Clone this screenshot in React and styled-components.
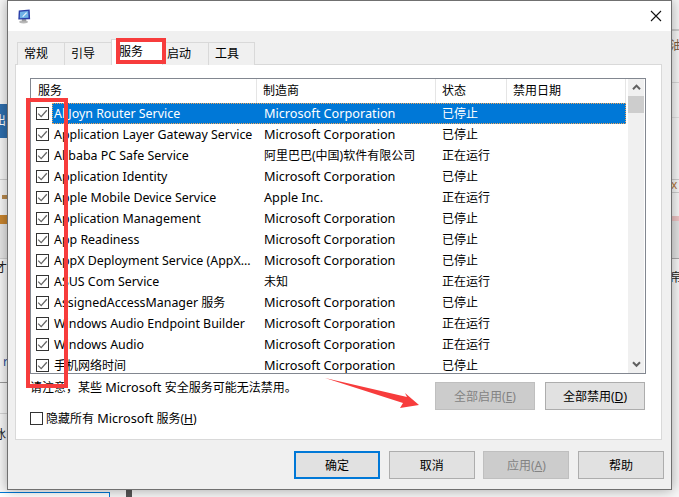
import styled, { createGlobalStyle } from "styled-components";

const GlobalStyle = createGlobalStyle`
  html, body {
    margin: 0;
    padding: 0;
    width: 679px;
    height: 497px;
    overflow: hidden;
    background: #f4f4f4;
  }
  * { box-sizing: border-box; }
`;

const Page = styled.div`
  position: relative;
  width: 679px;
  height: 497px;
  overflow: hidden;
  font-family: "Noto Sans", "Noto Sans CJK SC", sans-serif;
  font-size: 12px;
  color: #000;
`;

// bits of the other windows peeking out behind the dialog
const Backdrop = styled.div`
  position: absolute;
  inset: 0;
  background: #f7f7f7;
`;

const BgBlock = styled.div`
  position: absolute;
  left: ${(p) => p.$x}px;
  top: ${(p) => p.$y}px;
  width: ${(p) => p.$w}px;
  height: ${(p) => p.$h}px;
  background: ${(p) => p.$color};
`;

const BgText = styled.span`
  position: absolute;
  left: ${(p) => p.$x}px;
  top: ${(p) => p.$y}px;
  line-height: 14px;
  color: ${(p) => p.$color || "#222"};
`;

const Dialog = styled.div`
  position: absolute;
  left: 7px;
  top: 0;
  width: 665px;
  height: 490px;
  display: flex;
  flex-direction: column;
  background: #f0f0f0;
  border: 1px solid #707070;
  box-shadow: 0 0 12px rgba(0, 0, 0, 0.35);
`;

const TitleBar = styled.div`
  height: 30px;
  flex: none;
  background: #fff;
  display: flex;
  align-items: center;
  justify-content: space-between;
  padding: 0 9px 0 9px;
`;

const Content = styled.div`
  flex: 1;
  display: flex;
  flex-direction: column;
  padding: 9px 9px 0 7px;
`;

const TabRow = styled.div`
  display: flex;
  align-items: flex-end;
  height: 25px;
  padding-left: 2px;
  margin-bottom: -1px;
  position: relative;
  z-index: 1;
`;

const Tab = styled.div`
  width: 48px;
  height: 23px;
  padding-left: 6px;
  line-height: 22px;
  background: #f0f0f0;
  border: 1px solid #d9d9d9;
  border-left-width: ${(p) => (p.$first ? 1 : 0)}px;
  border-bottom: 0;
  &:last-child { width: 46px; }
`;

const ActiveTab = styled(Tab)`
  width: 52px;
  height: 26px;
  margin: 0 -2px;
  padding-left: 7px;
  line-height: 24px;
  background: #fff;
  border-left-width: 1px;
  position: relative;
  z-index: 1;
`;

const Panel = styled.div`
  width: 647px;
  height: 376px;
  background: #fff;
  border: 1px solid #d9d9d9;
  padding: 13px 15px 0 14px;
`;

const ListView = styled.div`
  position: relative;
  height: 296px;
  border: 1px solid #828790;
  overflow: hidden;
  padding-right: 19px;
`;

const Columns = styled.div`
  display: grid;
  grid-template-columns: 226px 179px 71px 119px;
`;

const HeadCell = styled.div`
  height: 24px;
  line-height: 23px;
  padding-left: ${(p) => p.$pad}px;
  border-right: 1px solid #e5e5e5;
`;

const Row = styled.div`
  display: flex;
  align-items: center;
  height: 21px;
  padding-left: 5px;
  white-space: nowrap;
`;

const CheckBox = styled.span`
  flex: none;
  width: 13px;
  height: 13px;
  border: 1px solid #333;
  background: #fff;
  display: flex;
  align-items: center;
  justify-content: center;
`;

const RowCells = styled.div`
  flex: 1;
  height: 21px;
  margin-left: 3px;
  display: grid;
  grid-template-columns: 205px 179px 71px 1fr;
  align-items: center;
  background: ${(p) => (p.$selected ? "#0078d7" : "transparent")};
  color: ${(p) => (p.$selected ? "#fff" : "#000")};
  outline: ${(p) => (p.$selected ? "1px dotted #f2a65a" : "none")};
  outline-offset: -1px;
`;

const Cell = styled.span`
  padding-left: ${(p) => p.$pad}px;
  line-height: 21px;
  overflow: hidden;
`;

// latin runs sit a bit larger than the 12px chinese text
const Latin = styled.span`
  font-size: ${(p) => p.$size}px;
`;

const ScrollBar = styled.div`
  position: absolute;
  right: 1px;
  top: 0;
  bottom: 0;
  width: 16px;
  background: #f0f0f0;
  display: flex;
  flex-direction: column;
  align-items: center;
`;

const ScrollArrow = styled.div`
  height: 17px;
  flex: none;
  display: flex;
  align-items: center;
  justify-content: center;
`;

const ScrollThumb = styled.div`
  width: 16px;
  height: 17px;
  background: #cdcdcd;
`;

const ScrollTrack = styled.div`
  flex: 1;
`;

const Controls = styled.div`
  display: flex;
  justify-content: space-between;
  margin-top: 5px;
`;

const NoteColumn = styled.div`
  display: flex;
  flex-direction: column;
  gap: 14px;
`;

const Note = styled.div`
  line-height: 16px;
  color: #000;
`;

const HideRow = styled.label`
  display: flex;
  align-items: center;
  gap: 3px;
  line-height: 16px;
`;

const ActionButtons = styled.div`
  display: flex;
  gap: 10px;
  padding: 3px 1px 0 0;
`;

const Button = styled.div`
  width: ${(p) => p.$w}px;
  height: 28px;
  display: flex;
  align-items: center;
  justify-content: center;
  background: ${(p) => (p.$disabled ? "#cccccc" : "#e1e1e1")};
  color: ${(p) => (p.$disabled ? "#838383" : "#000")};
  border: ${(p) => (p.$primary ? "2px solid #0078d7" : p.$disabled ? "1px solid #bfbfbf" : "1px solid #adadad")};
`;

const Footer = styled.div`
  display: flex;
  justify-content: flex-end;
  gap: 8.67px;
  padding: 11px 0 0;
  margin-right: -2px;
`;

const HighlightBox = styled.div`
  position: absolute;
  left: ${(p) => p.$x}px;
  top: ${(p) => p.$y}px;
  width: ${(p) => p.$w}px;
  height: ${(p) => p.$h}px;
  border: ${(p) => p.$stroke}px solid #f73c3c;
  z-index: 3;
`;

const Overlay = styled.svg`
  position: absolute;
  left: 0;
  top: 0;
  z-index: 3;
`;

const MC = "Microsoft Corporation";

const services = [
  ["AllJoyn Router Service", MC, "已停止"],
  ["Application Layer Gateway Service", MC, "已停止"],
  ["Alibaba PC Safe Service", "阿里巴巴(中国)软件有限公司", "正在运行"],
  ["Application Identity", MC, "已停止"],
  ["Apple Mobile Device Service", "Apple Inc.", "正在运行"],
  ["Application Management", MC, "已停止"],
  ["App Readiness", MC, "已停止"],
  ["AppX Deployment Service (AppX...", MC, "已停止"],
  ["ASUS Com Service", "未知", "正在运行"],
  ["AssignedAccessManager 服务", MC, "已停止"],
  ["Windows Audio Endpoint Builder", MC, "正在运行"],
  ["Windows Audio", MC, "正在运行"],
  ["手机网络时间", MC, "已停止"],
];

function mixed(text, size) {
  return text.split(/([A-Za-z][A-Za-z .()]*)/).map((part, i) =>
    i % 2 ? <Latin key={i} $size={size}>{part}</Latin> : part
  );
}

function Tick() {
  return (
    <svg width="11" height="11" viewBox="0 0 11 11">
      <path d="M1.2 5.6 L4.2 8.6 L9.8 2.2" fill="none" stroke="#666" strokeWidth="1.3" />
    </svg>
  );
}

function MonitorIcon() {
  return (
    <svg width="14" height="15" viewBox="0 0 16 17">
      <ellipse cx="7.5" cy="14.8" rx="5" ry="1.6" fill="#b9b9b9" />
      <rect x="5.5" y="11" width="5" height="3" fill="#9d9d9d" />
      <path d="M2 1.5 L14.5 0.5 L15 11.5 L1.5 12 Z" fill="#2b3fa8" />
      <path d="M3.5 3 L12.8 2.2 L13.2 10 L3.2 10.4 Z" fill="#6fb1e6" />
      <path d="M6 8.5 L10.5 3.5 L11.5 4.5 L7 9.2 Z" fill="#eef6fc" />
    </svg>
  );
}

function Chevron({ down }) {
  return (
    <svg width="9" height="7" viewBox="0 0 9 7">
      <path
        d={down ? "M1 1.2 L4.5 4.8 L8 1.2" : "M1 5.2 L4.5 1.6 L8 5.2"}
        fill="none"
        stroke="#606060"
        strokeWidth="2"
      />
    </svg>
  );
}

export default function App() {
  return (
    <Page>
      <GlobalStyle />
      <Backdrop>
        <BgBlock $x={0} $y={104} $w={7} $h={34} $color="#2f6fae" />
        <BgText $x={-6} $y={114} $color="#fff">出</BgText>
        <BgBlock $x={0} $y={179} $w={7} $h={1} $color="#cfcfcf" />
        <BgBlock $x={2} $y={195} $w={5} $h={4} $color="#b98a4e" />
        <BgBlock $x={0} $y={215} $w={7} $h={9} $color="#c9852f" />
        <BgBlock $x={0} $y={224} $w={7} $h={34} $color="#e6e6e6" />
        <BgBlock $x={0} $y={258} $w={7} $h={1} $color="#cfcfcf" />
        <BgText $x={-5} $y={261}>才</BgText>
        <BgText $x={3} $y={355} $color="#2a4f9a">r</BgText>
        <BgBlock $x={0} $y={382} $w={7} $h={1} $color="#9a9a9a" />
        <BgBlock $x={0} $y={413} $w={7} $h={1} $color="#d4d4d4" />
        <BgText $x={-6} $y={428}>冰</BgText>
        <BgBlock $x={672} $y={29} $w={7} $h={2} $color="#cfcfcf" />
        <BgText $x={670} $y={39} $color="#7a5a40">油</BgText>
        <BgBlock $x={672} $y={82} $w={7} $h={1} $color="#d9d9d9" />
        <BgBlock $x={672} $y={117} $w={7} $h={1} $color="#e2e2e2" />
        <BgBlock $x={672} $y={179} $w={7} $h={1} $color="#cfcfcf" />
        <BgText $x={671} $y={178} $color="#b5763a">x</BgText>
        <BgBlock $x={672} $y={192} $w={7} $h={1} $color="#cfcfcf" />
        <BgBlock $x={672} $y={216} $w={7} $h={5} $color="#eec4c4" />
        <BgBlock $x={672} $y={221} $w={7} $h={37} $color="#e3e3e3" />
        <BgBlock $x={672} $y={258} $w={7} $h={1} $color="#a9a9a9" />
        <BgText $x={670} $y={271}>帛</BgText>
        <BgBlock $x={0} $y={492} $w={110} $h={1} $color="#0078d7" />
        <BgBlock $x={109} $y={492} $w={1} $h={5} $color="#0078d7" />
        <BgBlock $x={0} $y={493} $w={109} $h={4} $color="#fff" />
        <BgBlock $x={126} $y={490} $w={6} $h={7} $color="#555" />
      </Backdrop>

      <Dialog>
        <TitleBar>
          <MonitorIcon />
          <svg width="12" height="12" viewBox="0 0 12 12">
            <path d="M1 1 L11 11 M11 1 L1 11" stroke="#111" strokeWidth="1.1" />
          </svg>
        </TitleBar>
        <Content>
          <TabRow>
            <Tab $first>常规</Tab>
            <Tab>引导</Tab>
            <ActiveTab>服务</ActiveTab>
            <Tab>启动</Tab>
            <Tab>工具</Tab>
          </TabRow>
          <Panel>
            <ListView>
              <Columns>
                <HeadCell $pad={7}>服务</HeadCell>
                <HeadCell $pad={6}>制造商</HeadCell>
                <HeadCell $pad={6}>状态</HeadCell>
                <HeadCell $pad={6}>禁用日期</HeadCell>
              </Columns>
              {services.map(([name, maker, status], i) => (
                <Row key={name}>
                  <CheckBox><Tick /></CheckBox>
                  <RowCells $selected={i === 0}>
                    <Cell $pad={2}>{mixed(name, 12.4)}</Cell>
                    <Cell $pad={7}>{mixed(maker, 12.7)}</Cell>
                    <Cell $pad={6}>{status}</Cell>
                    <Cell />
                  </RowCells>
                </Row>
              ))}
              <ScrollBar>
                <ScrollArrow><Chevron /></ScrollArrow>
                <ScrollThumb />
                <ScrollTrack />
                <ScrollArrow><Chevron down /></ScrollArrow>
              </ScrollBar>
            </ListView>
            <Controls>
              <NoteColumn>
                <Note>{mixed("请注意，某些 Microsoft 安全服务可能无法禁用。", 12.7)}</Note>
                <HideRow>
                  <CheckBox />
                  <span>隐藏所有 <Latin $size={12.7}>Microsoft</Latin> 服务(<u>H</u>)</span>
                </HideRow>
              </NoteColumn>
              <ActionButtons>
                <Button $w={100} $disabled>全部启用(<u>E</u>)</Button>
                <Button $w={100}>全部禁用(<u>D</u>)</Button>
              </ActionButtons>
            </Controls>
          </Panel>
          <Footer>
            <Button $w={86} $primary>确定</Button>
            <Button $w={86}>取消</Button>
            <Button $w={86} $disabled>应用(<u>A</u>)</Button>
            <Button $w={86}>帮助</Button>
          </Footer>
        </Content>
      </Dialog>

      <HighlightBox $x={116} $y={38} $w={50} $h={26} $stroke={4} />
      <HighlightBox $x={26} $y={98} $w={42} $h={290} $stroke={4} />
      <Overlay width="679" height="497" viewBox="0 0 679 497">
        <path d="M325 378 L407 397 L405 393 L419 405 L400 408 L403 403 Z" fill="#f73c3c" />
      </Overlay>
    </Page>
  );
}
